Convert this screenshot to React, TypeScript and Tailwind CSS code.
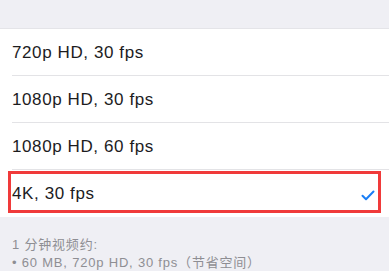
import React from "react";

const rows = ["720p HD, 30 fps", "1080p HD, 30 fps", "1080p HD, 60 fps", "4K, 30 fps"];

export default function App() {
  return (
    <div
      className="w-[389px] h-[271px] overflow-hidden bg-[#efeff4]"
      style={{ fontFamily: '"Liberation Sans", "Noto Sans CJK SC", sans-serif' }}
    >
      <div className="h-[29px] border-b border-[#e4e4e8]" />
      <div className="bg-white">
        {rows.map((r, i) => (
          <div key={r} className="relative pl-[12px]">
            <div
              className={`flex items-center h-[47px] pr-[14px] ${
                i < rows.length - 1 ? "border-b border-[#e3e3e6]" : ""
              }`}
            >
              <span className="flex-1 text-[17px] tracking-[0.6px] text-[#1c1c1e] pt-[1px]">{r}</span>
              {i === rows.length - 1 && (
                <svg width="14" height="11" viewBox="0 0 14 11" className="mt-[4px]">
                  <path
                    d="M1.5 5.8 L5 9.2 L12.5 1.5"
                    fill="none"
                    stroke="#1a7ef5"
                    strokeWidth="2"
                    strokeLinecap="round"
                    strokeLinejoin="round"
                  />
                </svg>
              )}
            </div>
            {i === rows.length - 1 && (
              <div className="absolute left-[8px] right-[8px] top-[1px] bottom-[4px] border-[3px] border-[#f03a3a]" />
            )}
          </div>
        ))}
      </div>
      <div className="pl-[12px] pt-[19px] text-[13px] leading-[18px] tracking-[0.8px] text-[#8e8e93]">
        <div>1 分钟视频约:</div>
        <div>• 60 MB, 720p HD, 30 fps（节省空间）</div>
      </div>
    </div>
  );
}
